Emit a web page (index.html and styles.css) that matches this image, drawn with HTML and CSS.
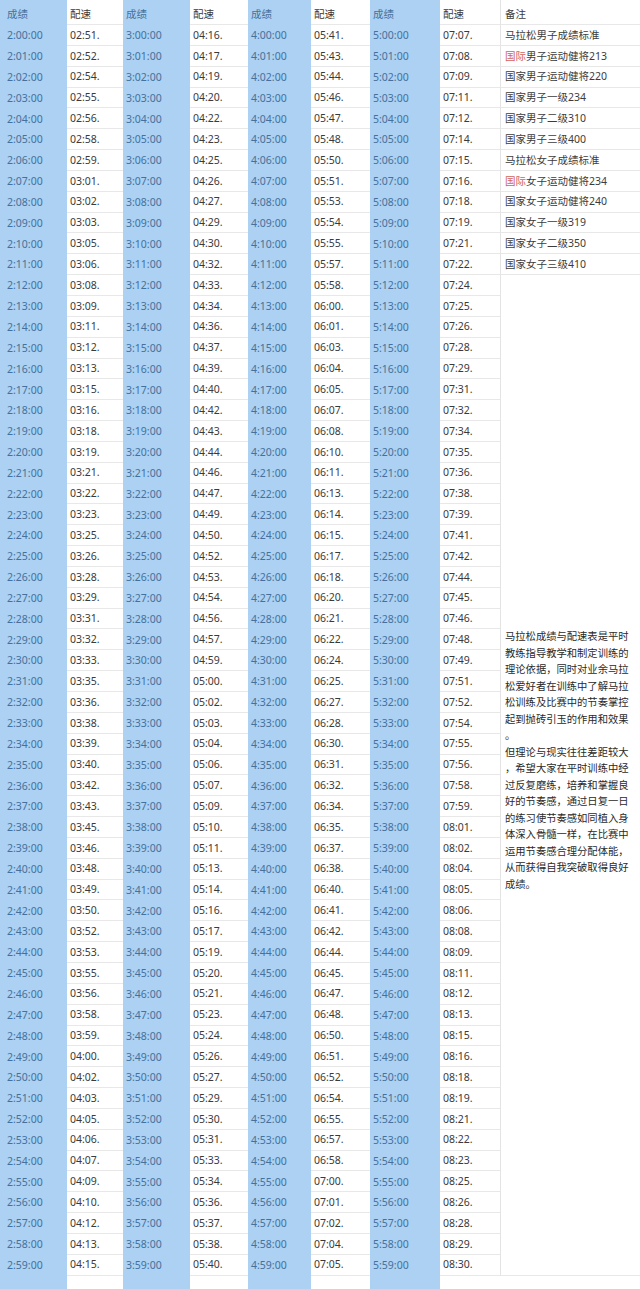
FILE: index.html
```html
<!DOCTYPE html>
<html lang="zh-CN">
<head>
<meta charset="utf-8">
<title>马拉松成绩与配速表</title>
<link rel="stylesheet" href="styles.css">
</head>
<body>
<div class="sheet">
<div class="c k f h">成绩</div><div class="c p h">配速</div><div class="c k h">成绩</div><div class="c p h">配速</div><div class="c k h">成绩</div><div class="c p h">配速</div><div class="c k h">成绩</div><div class="c p h">配速</div><div class="c p n h">备注</div>
<div class="c k f">2:00:00</div><div class="c p">02:51.</div><div class="c k">3:00:00</div><div class="c p">04:16.</div><div class="c k">4:00:00</div><div class="c p">05:41.</div><div class="c k">5:00:00</div><div class="c p">07:07.</div><div class="c p n">马拉松男子成绩标准</div>
<div class="c k f">2:01:00</div><div class="c p">02:52.</div><div class="c k">3:01:00</div><div class="c p">04:17.</div><div class="c k">4:01:00</div><div class="c p">05:43.</div><div class="c k">5:01:00</div><div class="c p">07:08.</div><div class="c p n"><span class="red">国际</span>男子运动健将213</div>
<div class="c k f">2:02:00</div><div class="c p">02:54.</div><div class="c k">3:02:00</div><div class="c p">04:19.</div><div class="c k">4:02:00</div><div class="c p">05:44.</div><div class="c k">5:02:00</div><div class="c p">07:09.</div><div class="c p n">国家男子运动健将220</div>
<div class="c k f">2:03:00</div><div class="c p">02:55.</div><div class="c k">3:03:00</div><div class="c p">04:20.</div><div class="c k">4:03:00</div><div class="c p">05:46.</div><div class="c k">5:03:00</div><div class="c p">07:11.</div><div class="c p n">国家男子一级234</div>
<div class="c k f">2:04:00</div><div class="c p">02:56.</div><div class="c k">3:04:00</div><div class="c p">04:22.</div><div class="c k">4:04:00</div><div class="c p">05:47.</div><div class="c k">5:04:00</div><div class="c p">07:12.</div><div class="c p n">国家男子二级310</div>
<div class="c k f">2:05:00</div><div class="c p">02:58.</div><div class="c k">3:05:00</div><div class="c p">04:23.</div><div class="c k">4:05:00</div><div class="c p">05:48.</div><div class="c k">5:05:00</div><div class="c p">07:14.</div><div class="c p n">国家男子三级400</div>
<div class="c k f">2:06:00</div><div class="c p">02:59.</div><div class="c k">3:06:00</div><div class="c p">04:25.</div><div class="c k">4:06:00</div><div class="c p">05:50.</div><div class="c k">5:06:00</div><div class="c p">07:15.</div><div class="c p n">马拉松女子成绩标准</div>
<div class="c k f">2:07:00</div><div class="c p">03:01.</div><div class="c k">3:07:00</div><div class="c p">04:26.</div><div class="c k">4:07:00</div><div class="c p">05:51.</div><div class="c k">5:07:00</div><div class="c p">07:16.</div><div class="c p n"><span class="red">国际</span>女子运动健将234</div>
<div class="c k f">2:08:00</div><div class="c p">03:02.</div><div class="c k">3:08:00</div><div class="c p">04:27.</div><div class="c k">4:08:00</div><div class="c p">05:53.</div><div class="c k">5:08:00</div><div class="c p">07:18.</div><div class="c p n">国家女子运动健将240</div>
<div class="c k f">2:09:00</div><div class="c p">03:03.</div><div class="c k">3:09:00</div><div class="c p">04:29.</div><div class="c k">4:09:00</div><div class="c p">05:54.</div><div class="c k">5:09:00</div><div class="c p">07:19.</div><div class="c p n">国家女子一级319</div>
<div class="c k f">2:10:00</div><div class="c p">03:05.</div><div class="c k">3:10:00</div><div class="c p">04:30.</div><div class="c k">4:10:00</div><div class="c p">05:55.</div><div class="c k">5:10:00</div><div class="c p">07:21.</div><div class="c p n">国家女子二级350</div>
<div class="c k f">2:11:00</div><div class="c p">03:06.</div><div class="c k">3:11:00</div><div class="c p">04:32.</div><div class="c k">4:11:00</div><div class="c p">05:57.</div><div class="c k">5:11:00</div><div class="c p">07:22.</div><div class="c p n">国家女子三级410</div>
<div class="c k f">2:12:00</div><div class="c p">03:08.</div><div class="c k">3:12:00</div><div class="c p">04:33.</div><div class="c k">4:12:00</div><div class="c p">05:58.</div><div class="c k">5:12:00</div><div class="c p">07:24.</div>
<div class="note">
<p>马拉松成绩与配速表是平时<br>教练指导教学和制定训练的<br>理论依据，同时对业余马拉<br>松爱好者在训练中了解马拉<br>松训练及比赛中的节奏掌控<br>起到抛砖引玉的作用和效果<br>。<br>但理论与现实往往差距较大<br>，希望大家在平时训练中经<br>过反复磨练，培养和掌握良<br>好的节奏感，通过日复一日<br>的练习使节奏感如同植入身<br>体深入骨髓一样，在比赛中<br>运用节奏感合理分配体能，<br>从而获得自我突破取得良好<br>成绩。</p>
</div>
<div class="c k f">2:13:00</div><div class="c p">03:09.</div><div class="c k">3:13:00</div><div class="c p">04:34.</div><div class="c k">4:13:00</div><div class="c p">06:00.</div><div class="c k">5:13:00</div><div class="c p">07:25.</div>
<div class="c k f">2:14:00</div><div class="c p">03:11.</div><div class="c k">3:14:00</div><div class="c p">04:36.</div><div class="c k">4:14:00</div><div class="c p">06:01.</div><div class="c k">5:14:00</div><div class="c p">07:26.</div>
<div class="c k f">2:15:00</div><div class="c p">03:12.</div><div class="c k">3:15:00</div><div class="c p">04:37.</div><div class="c k">4:15:00</div><div class="c p">06:03.</div><div class="c k">5:15:00</div><div class="c p">07:28.</div>
<div class="c k f">2:16:00</div><div class="c p">03:13.</div><div class="c k">3:16:00</div><div class="c p">04:39.</div><div class="c k">4:16:00</div><div class="c p">06:04.</div><div class="c k">5:16:00</div><div class="c p">07:29.</div>
<div class="c k f">2:17:00</div><div class="c p">03:15.</div><div class="c k">3:17:00</div><div class="c p">04:40.</div><div class="c k">4:17:00</div><div class="c p">06:05.</div><div class="c k">5:17:00</div><div class="c p">07:31.</div>
<div class="c k f">2:18:00</div><div class="c p">03:16.</div><div class="c k">3:18:00</div><div class="c p">04:42.</div><div class="c k">4:18:00</div><div class="c p">06:07.</div><div class="c k">5:18:00</div><div class="c p">07:32.</div>
<div class="c k f">2:19:00</div><div class="c p">03:18.</div><div class="c k">3:19:00</div><div class="c p">04:43.</div><div class="c k">4:19:00</div><div class="c p">06:08.</div><div class="c k">5:19:00</div><div class="c p">07:34.</div>
<div class="c k f">2:20:00</div><div class="c p">03:19.</div><div class="c k">3:20:00</div><div class="c p">04:44.</div><div class="c k">4:20:00</div><div class="c p">06:10.</div><div class="c k">5:20:00</div><div class="c p">07:35.</div>
<div class="c k f">2:21:00</div><div class="c p">03:21.</div><div class="c k">3:21:00</div><div class="c p">04:46.</div><div class="c k">4:21:00</div><div class="c p">06:11.</div><div class="c k">5:21:00</div><div class="c p">07:36.</div>
<div class="c k f">2:22:00</div><div class="c p">03:22.</div><div class="c k">3:22:00</div><div class="c p">04:47.</div><div class="c k">4:22:00</div><div class="c p">06:13.</div><div class="c k">5:22:00</div><div class="c p">07:38.</div>
<div class="c k f">2:23:00</div><div class="c p">03:23.</div><div class="c k">3:23:00</div><div class="c p">04:49.</div><div class="c k">4:23:00</div><div class="c p">06:14.</div><div class="c k">5:23:00</div><div class="c p">07:39.</div>
<div class="c k f">2:24:00</div><div class="c p">03:25.</div><div class="c k">3:24:00</div><div class="c p">04:50.</div><div class="c k">4:24:00</div><div class="c p">06:15.</div><div class="c k">5:24:00</div><div class="c p">07:41.</div>
<div class="c k f">2:25:00</div><div class="c p">03:26.</div><div class="c k">3:25:00</div><div class="c p">04:52.</div><div class="c k">4:25:00</div><div class="c p">06:17.</div><div class="c k">5:25:00</div><div class="c p">07:42.</div>
<div class="c k f">2:26:00</div><div class="c p">03:28.</div><div class="c k">3:26:00</div><div class="c p">04:53.</div><div class="c k">4:26:00</div><div class="c p">06:18.</div><div class="c k">5:26:00</div><div class="c p">07:44.</div>
<div class="c k f">2:27:00</div><div class="c p">03:29.</div><div class="c k">3:27:00</div><div class="c p">04:54.</div><div class="c k">4:27:00</div><div class="c p">06:20.</div><div class="c k">5:27:00</div><div class="c p">07:45.</div>
<div class="c k f">2:28:00</div><div class="c p">03:31.</div><div class="c k">3:28:00</div><div class="c p">04:56.</div><div class="c k">4:28:00</div><div class="c p">06:21.</div><div class="c k">5:28:00</div><div class="c p">07:46.</div>
<div class="c k f">2:29:00</div><div class="c p">03:32.</div><div class="c k">3:29:00</div><div class="c p">04:57.</div><div class="c k">4:29:00</div><div class="c p">06:22.</div><div class="c k">5:29:00</div><div class="c p">07:48.</div>
<div class="c k f">2:30:00</div><div class="c p">03:33.</div><div class="c k">3:30:00</div><div class="c p">04:59.</div><div class="c k">4:30:00</div><div class="c p">06:24.</div><div class="c k">5:30:00</div><div class="c p">07:49.</div>
<div class="c k f">2:31:00</div><div class="c p">03:35.</div><div class="c k">3:31:00</div><div class="c p">05:00.</div><div class="c k">4:31:00</div><div class="c p">06:25.</div><div class="c k">5:31:00</div><div class="c p">07:51.</div>
<div class="c k f">2:32:00</div><div class="c p">03:36.</div><div class="c k">3:32:00</div><div class="c p">05:02.</div><div class="c k">4:32:00</div><div class="c p">06:27.</div><div class="c k">5:32:00</div><div class="c p">07:52.</div>
<div class="c k f">2:33:00</div><div class="c p">03:38.</div><div class="c k">3:33:00</div><div class="c p">05:03.</div><div class="c k">4:33:00</div><div class="c p">06:28.</div><div class="c k">5:33:00</div><div class="c p">07:54.</div>
<div class="c k f">2:34:00</div><div class="c p">03:39.</div><div class="c k">3:34:00</div><div class="c p">05:04.</div><div class="c k">4:34:00</div><div class="c p">06:30.</div><div class="c k">5:34:00</div><div class="c p">07:55.</div>
<div class="c k f">2:35:00</div><div class="c p">03:40.</div><div class="c k">3:35:00</div><div class="c p">05:06.</div><div class="c k">4:35:00</div><div class="c p">06:31.</div><div class="c k">5:35:00</div><div class="c p">07:56.</div>
<div class="c k f">2:36:00</div><div class="c p">03:42.</div><div class="c k">3:36:00</div><div class="c p">05:07.</div><div class="c k">4:36:00</div><div class="c p">06:32.</div><div class="c k">5:36:00</div><div class="c p">07:58.</div>
<div class="c k f">2:37:00</div><div class="c p">03:43.</div><div class="c k">3:37:00</div><div class="c p">05:09.</div><div class="c k">4:37:00</div><div class="c p">06:34.</div><div class="c k">5:37:00</div><div class="c p">07:59.</div>
<div class="c k f">2:38:00</div><div class="c p">03:45.</div><div class="c k">3:38:00</div><div class="c p">05:10.</div><div class="c k">4:38:00</div><div class="c p">06:35.</div><div class="c k">5:38:00</div><div class="c p">08:01.</div>
<div class="c k f">2:39:00</div><div class="c p">03:46.</div><div class="c k">3:39:00</div><div class="c p">05:11.</div><div class="c k">4:39:00</div><div class="c p">06:37.</div><div class="c k">5:39:00</div><div class="c p">08:02.</div>
<div class="c k f">2:40:00</div><div class="c p">03:48.</div><div class="c k">3:40:00</div><div class="c p">05:13.</div><div class="c k">4:40:00</div><div class="c p">06:38.</div><div class="c k">5:40:00</div><div class="c p">08:04.</div>
<div class="c k f">2:41:00</div><div class="c p">03:49.</div><div class="c k">3:41:00</div><div class="c p">05:14.</div><div class="c k">4:41:00</div><div class="c p">06:40.</div><div class="c k">5:41:00</div><div class="c p">08:05.</div>
<div class="c k f">2:42:00</div><div class="c p">03:50.</div><div class="c k">3:42:00</div><div class="c p">05:16.</div><div class="c k">4:42:00</div><div class="c p">06:41.</div><div class="c k">5:42:00</div><div class="c p">08:06.</div>
<div class="c k f">2:43:00</div><div class="c p">03:52.</div><div class="c k">3:43:00</div><div class="c p">05:17.</div><div class="c k">4:43:00</div><div class="c p">06:42.</div><div class="c k">5:43:00</div><div class="c p">08:08.</div>
<div class="c k f">2:44:00</div><div class="c p">03:53.</div><div class="c k">3:44:00</div><div class="c p">05:19.</div><div class="c k">4:44:00</div><div class="c p">06:44.</div><div class="c k">5:44:00</div><div class="c p">08:09.</div>
<div class="c k f">2:45:00</div><div class="c p">03:55.</div><div class="c k">3:45:00</div><div class="c p">05:20.</div><div class="c k">4:45:00</div><div class="c p">06:45.</div><div class="c k">5:45:00</div><div class="c p">08:11.</div>
<div class="c k f">2:46:00</div><div class="c p">03:56.</div><div class="c k">3:46:00</div><div class="c p">05:21.</div><div class="c k">4:46:00</div><div class="c p">06:47.</div><div class="c k">5:46:00</div><div class="c p">08:12.</div>
<div class="c k f">2:47:00</div><div class="c p">03:58.</div><div class="c k">3:47:00</div><div class="c p">05:23.</div><div class="c k">4:47:00</div><div class="c p">06:48.</div><div class="c k">5:47:00</div><div class="c p">08:13.</div>
<div class="c k f">2:48:00</div><div class="c p">03:59.</div><div class="c k">3:48:00</div><div class="c p">05:24.</div><div class="c k">4:48:00</div><div class="c p">06:50.</div><div class="c k">5:48:00</div><div class="c p">08:15.</div>
<div class="c k f">2:49:00</div><div class="c p">04:00.</div><div class="c k">3:49:00</div><div class="c p">05:26.</div><div class="c k">4:49:00</div><div class="c p">06:51.</div><div class="c k">5:49:00</div><div class="c p">08:16.</div>
<div class="c k f">2:50:00</div><div class="c p">04:02.</div><div class="c k">3:50:00</div><div class="c p">05:27.</div><div class="c k">4:50:00</div><div class="c p">06:52.</div><div class="c k">5:50:00</div><div class="c p">08:18.</div>
<div class="c k f">2:51:00</div><div class="c p">04:03.</div><div class="c k">3:51:00</div><div class="c p">05:29.</div><div class="c k">4:51:00</div><div class="c p">06:54.</div><div class="c k">5:51:00</div><div class="c p">08:19.</div>
<div class="c k f">2:52:00</div><div class="c p">04:05.</div><div class="c k">3:52:00</div><div class="c p">05:30.</div><div class="c k">4:52:00</div><div class="c p">06:55.</div><div class="c k">5:52:00</div><div class="c p">08:21.</div>
<div class="c k f">2:53:00</div><div class="c p">04:06.</div><div class="c k">3:53:00</div><div class="c p">05:31.</div><div class="c k">4:53:00</div><div class="c p">06:57.</div><div class="c k">5:53:00</div><div class="c p">08:22.</div>
<div class="c k f">2:54:00</div><div class="c p">04:07.</div><div class="c k">3:54:00</div><div class="c p">05:33.</div><div class="c k">4:54:00</div><div class="c p">06:58.</div><div class="c k">5:54:00</div><div class="c p">08:23.</div>
<div class="c k f">2:55:00</div><div class="c p">04:09.</div><div class="c k">3:55:00</div><div class="c p">05:34.</div><div class="c k">4:55:00</div><div class="c p">07:00.</div><div class="c k">5:55:00</div><div class="c p">08:25.</div>
<div class="c k f">2:56:00</div><div class="c p">04:10.</div><div class="c k">3:56:00</div><div class="c p">05:36.</div><div class="c k">4:56:00</div><div class="c p">07:01.</div><div class="c k">5:56:00</div><div class="c p">08:26.</div>
<div class="c k f">2:57:00</div><div class="c p">04:12.</div><div class="c k">3:57:00</div><div class="c p">05:37.</div><div class="c k">4:57:00</div><div class="c p">07:02.</div><div class="c k">5:57:00</div><div class="c p">08:28.</div>
<div class="c k f">2:58:00</div><div class="c p">04:13.</div><div class="c k">3:58:00</div><div class="c p">05:38.</div><div class="c k">4:58:00</div><div class="c p">07:04.</div><div class="c k">5:58:00</div><div class="c p">08:29.</div>
<div class="c k f">2:59:00</div><div class="c p">04:15.</div><div class="c k">3:59:00</div><div class="c p">05:40.</div><div class="c k">4:59:00</div><div class="c p">07:05.</div><div class="c k">5:59:00</div><div class="c p">08:30.</div>
</div>
</body>
</html>
```
FILE: styles.css
```css
html, body {
  margin: 0;
  padding: 0;
  background: #ffffff;
}

.sheet {
  width: 640px;
  height: 1289px;
  display: grid;
  grid-template-columns: 67px 56px 67px 58px 63px 59px 70px 60px 140px;
  grid-template-rows: 25px repeat(60, 20.85px) 1fr;
  font-family: "Noto Sans", "Noto Sans CJK SC", sans-serif;
  font-size: 10.5px;
  background: linear-gradient(to right,
    #acd1f2 0 67px, #ffffff 67px 123px,
    #acd1f2 123px 190px, #ffffff 190px 248px,
    #acd1f2 248px 311px, #ffffff 311px 370px,
    #acd1f2 370px 440px, #ffffff 440px 640px);
}

.c {
  display: flex;
  align-items: center;
  padding-left: 3px;
  white-space: nowrap;
  box-sizing: border-box;
  line-height: 1;
}

.k {
  color: #45709b;
}

.f {
  padding-left: 7px;
}

.p {
  color: #3a3a3a;
  border-bottom: 1px solid #e8e8e8;
}

.h {
  padding-top: 4px;
}

.n {
  padding-left: 4px;
  border-left: 1px solid #e4e4e4;
  color: #3c3c3c;
}

.red {
  color: #d0625c;
}

.note {
  grid-column: 9;
  grid-row: span 48;
  border-left: 1px solid #e4e4e4;
  border-bottom: 1px solid #e8e8e8;
  padding: 353px 0 0 4px;
  box-sizing: border-box;
}

.note p {
  margin: 0;
  font-family: "Noto Sans CJK SC", sans-serif;
  font-size: 10.3px;
  line-height: 16.5px;
  color: #2a2a2a;
  white-space: nowrap;
}
```
